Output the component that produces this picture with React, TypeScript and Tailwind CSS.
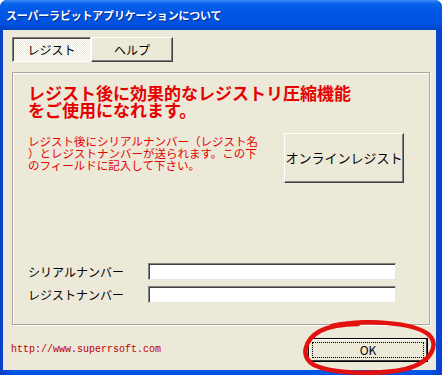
import React from "react";

const jp = { fontFamily: '"MS UI Gothic", "Noto Sans CJK JP", sans-serif' };

export default function App() {
  return (
    <div
      className="relative w-[442px] h-[375px] flex flex-col rounded-t-[7px] overflow-hidden bg-[linear-gradient(to_right,#0a3fc4,#0055e5_3%,#0055e5_97%,#0a3fc4)]"
      style={jp}
    >
      {/* Title bar */}
      <div className="h-[30px] shrink-0 flex items-center pl-[6px] bg-[linear-gradient(to_bottom,#3d8bf8_0%,#0a62ea_12%,#0055e5_45%,#0052de_80%,#0043c2_100%)]">
        <span className="text-white font-bold text-[11px] leading-none tracking-[-0.2px] [text-shadow:1px_1px_0_#0a2a8a]">
          スーパーラビットアプリケーションについて
        </span>
      </div>

      {/* Body */}
      <div className="flex-1 ml-[3px] mr-[6px] mb-[5px] bg-[#ece9d8] flex flex-col">
        {/* Tabs (toggle buttons) */}
        <div className="mt-[7px] ml-[9px] flex h-[25px]">
          <div className="w-[79px] h-[25px] flex items-center justify-center text-[12px] text-black border border-t-[#808080] border-l-[#808080] border-b-white border-r-white shadow-[inset_1px_1px_0_#404040] bg-[repeating-conic-gradient(#ffffff_0_25%,#ece9d8_0_50%)] bg-[length:2px_2px]">
            レジスト
          </div>
          <div className="w-[82px] h-[25px] flex items-center justify-center text-[12px] text-black border border-t-white border-l-white border-b-[#404040] border-r-[#404040] shadow-[inset_-1px_-1px_0_#808080]">
            ヘルプ
          </div>
        </div>

        {/* Group box */}
        <div className="mt-[10px] ml-[9px] w-[418px] h-[253px] border border-[#aca899] shadow-[inset_1px_1px_0_#ffffff,1px_1px_0_#ffffff] flex flex-col pl-[15px]">
          <div className="mt-[11px] flex flex-col text-[17px] font-bold text-[#e60000]">
            <div className="h-[17px] leading-[17px] whitespace-nowrap">レジスト後に効果的なレジストリ圧縮機能</div>
            <div className="h-[17px] leading-[17px] whitespace-nowrap">をご使用になれます。</div>
          </div>
          <div className="mt-[15px] flex">
            <div className="w-[256px] mt-[2px] flex flex-col text-[11.5px] text-[#e60000]">
              <div className="h-[12px] leading-[12px] whitespace-nowrap">レジスト後にシリアルナンバー（レジスト名</div>
              <div className="h-[12px] leading-[12px] whitespace-nowrap">）とレジストナンバーが送られます。この下</div>
              <div className="h-[12px] leading-[12px] whitespace-nowrap">のフィールドに記入して下さい。</div>
            </div>
            <div className="w-[120px] h-[50px] flex items-center justify-center text-[13px] text-black border border-t-white border-l-white border-b-[#404040] border-r-[#404040] shadow-[inset_-1px_-1px_0_#808080]">
              オンラインレジスト
            </div>
          </div>
          <div className="mt-[80px] flex items-center h-[17px]">
            <span className="w-[120px] text-[12px] text-black">シリアルナンバー</span>
            <div className="w-[248px] h-[17px] bg-white border border-t-[#808080] border-l-[#808080] border-b-[#e8e6dc] border-r-[#e8e6dc] shadow-[inset_1px_1px_0_#404040]" />
          </div>
          <div className="mt-[6px] flex items-center h-[17px]">
            <span className="w-[120px] text-[12px] text-black">レジストナンバー</span>
            <div className="w-[248px] h-[17px] bg-white border border-t-[#808080] border-l-[#808080] border-b-[#e8e6dc] border-r-[#e8e6dc] shadow-[inset_1px_1px_0_#404040]" />
          </div>
        </div>

        {/* Footer */}
        <div className="mt-[13px] flex items-start justify-between pl-[8px] pr-[8px]">
          <span
            className="mt-[6px] text-[10px] leading-[12px] text-[#c00000]"
            style={{ fontFamily: '"Liberation Mono", monospace' }}
          >
            http://www.superrsoft.com
          </span>
          <div className="w-[120px] h-[24px] border border-black shadow-[inset_-1px_-1px_0_#404040,inset_1px_1px_0_#ffffff] bg-[#ece9d8] p-[3px]">
            <div className="w-full h-full border border-dotted border-black flex items-center justify-center text-[12px] leading-none text-black">
              OK
            </div>
          </div>
        </div>
      </div>

      {/* Red hand-drawn ellipse over OK button */}
      <svg
        className="absolute left-[302px] top-[320px]"
        width="136"
        height="55"
        viewBox="0 0 136 55"
      >
        <path
          d="M30 6 C60 -1 110 2 126 14 C138 24 130 42 104 49 C76 55 30 54 12 45 C-2 37 2 20 18 11 C28 6 44 4 56 4"
          fill="none"
          stroke="#e31010"
          strokeWidth="4.5"
          strokeLinecap="round"
        />
      </svg>
    </div>
  );
}
